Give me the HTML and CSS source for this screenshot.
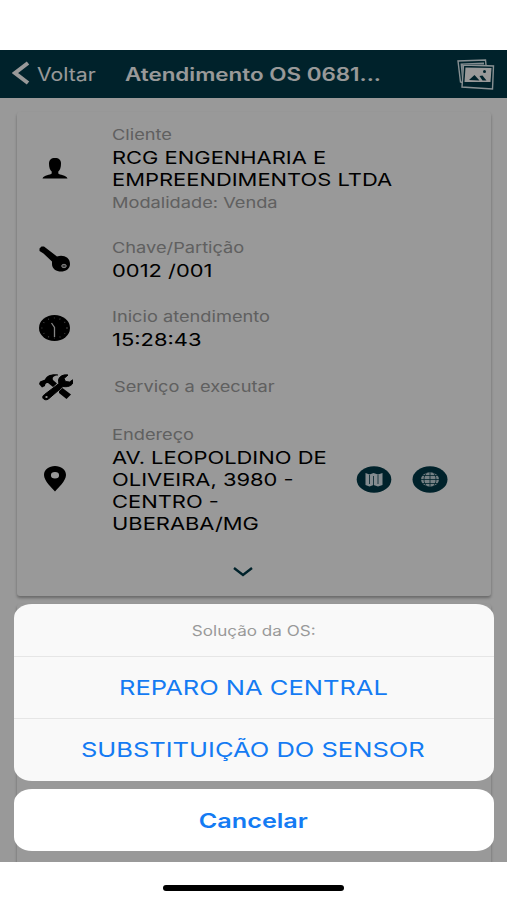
FILE: index.html
```html
<!DOCTYPE html>
<html lang="pt-BR">
<head>
<meta charset="utf-8">
<title>Atendimento OS</title>
<link rel="stylesheet" href="styles.css">
</head>
<body>
<main class="app">
  <header class="nav">
    <svg class="back" viewBox="0 0 18 24"><path d="M16 2 3 12l13 10" fill="none" stroke="#fff" stroke-width="4"/></svg>
    <span class="voltar wide">Voltar</span>
    <h1 class="wide">Atendimento OS 0681...</h1>
    <svg class="photos" viewBox="0 0 38 31">
      <path d="M5.500 23.500 3.500 23 1 2 28.500 1l.5 5" fill="none" stroke="#e4f1f5" stroke-width="1.400"/>
      <path d="M5 20 3.500 4.500 27 3.500v2L6 5Z" fill="#dceaf0"/>
      <path d="m6.500 6 30 1-1 23L5 28Z" fill="#003a49" stroke="#e4f1f5" stroke-width="1.400"/>
      <path d="m8.500 8.500 26 .5-1 14H7.500Z" fill="#fff"/>
      <path d="m12 21 5.500-5 5 5.500Zm10.500-4 3-.5 4 5h-4Z" fill="#003a49"/><circle cx="27.500" cy="12.500" r="1.500" fill="#003a49"/>
    </svg>
  </header>
  <section class="content">
    <article class="card">
      <div class="row client">
        <svg class="icon" viewBox="0 0 36 28"><path d="M18 3c4 0 6 2 6 5.500 0 4-1 6.500-2.700 8v2c1 1.500 8.200 1.500 9.200 5H5.500c1-3.500 8.200-3.500 9.200-5v-2C13 15 12 12.500 12 8.500 12 5 14 3 18 3Z"/></svg>
        <div class="info">
          <span class="label wide up">Cliente</span>
          <strong class="wide">RCG ENGENHARIA E<br>EMPREENDIMENTOS LTDA</strong>
          <span class="label wide down">Modalidade: Venda</span>
        </div>
      </div>
      <div class="row key">
        <svg class="icon" viewBox="0 0 36 28"><path d="m2.500 3.500 2-2h2.500l13 10c6-2 13 .5 13 7.500 0 10-18 10-18 0v-2.500l-8.500-8-4-2.500Z"/><ellipse cx="27" cy="21" rx="2.300" ry="1.700" fill="#666" stroke="#fff" stroke-width=".8"/></svg>
        <div class="info"><span class="label wide">Chave/Partição</span><strong class="wide">0012 /001</strong></div>
      </div>
      <div class="row start">
        <svg class="icon" viewBox="0 0 36 28"><ellipse cx="17.500" cy="14" rx="15.500" ry="13"/><ellipse cx="17.500" cy="14" rx="12.500" ry="10" fill="none" stroke="#888" stroke-dasharray=".8 5" stroke-width="1.200"/><path d="m14.500 9 3 4.500V23" fill="none" stroke="#ddd" stroke-width="1.300"/></svg>
        <div class="info"><span class="label wide">Inicio atendimento</span><strong class="wide">15:28:43</strong></div>
      </div>
      <div class="row service">
        <svg class="icon tools" viewBox="0 0 36 28"><path d="m2 11 1-2.500 5-2C9 3 14 .500 21 1.500v1c-4 0-6 1.500-5 4.500l4 3.500-4 3.500-5-4c-2-.5-3 1-3 3l-3 1.500Z"/><path d="m22 18 3.500-3 8.500 6.500-4.500 4.500-7.500-6Z"/><path d="M7.500 21.500 22 10.500c-2-5 2-9.500 9-8.500l-4 3.500 1.500 3 4 .5L37 6c0 6-5 8.500-11 7.500L12 25.500c-4 3.500-9-1-4.500-4Z" stroke="#000"/><ellipse cx="9.500" cy="24" rx="1.200" ry="1" fill="#fff"/></svg>
        <div class="info"><span class="label wide">Serviço a executar</span></div>
      </div>
      <div class="row address">
        <svg class="icon" viewBox="0 0 36 28"><path fill-rule="evenodd" d="M18 1c6 0 11 3.500 11 9 0 6-8 13-11 16.500C15 23 7 16 7 10c0-5.500 5-9 11-9Zm0 6a4 3.200 0 1 0 0 6.500A4 3.200 0 1 0 18 7Z"/></svg>
        <div class="info"><span class="label wide">Endereço</span><strong class="wide">AV. LEOPOLDINO DE<br>OLIVEIRA, 3980 -<br>CENTRO -<br>UBERABA/MG</strong></div>
        <div class="actions">
          <svg viewBox="0 0 36 27"><ellipse cx="18" cy="13.500" rx="17.300" ry="13.200" fill="#003a49"/><path d="m9.500 7 4 1.500L17.500 7 22 8.500 26.500 7v12L22 20.500 17.500 19l-4 1.500-4-1.500Z" fill="#dceaf0"/><path d="M13.500 9v9M17.500 10v10M22 9v9" stroke="#003a49" stroke-width=".8"/></svg>
          <svg viewBox="0 0 36 27"><ellipse cx="18" cy="13.500" rx="17.500" ry="13.200" fill="#003a49"/><ellipse cx="18" cy="13.500" rx="9" ry="7.200" fill="#c4d6dc"/><path d="M9 13.500h18M10.500 9.500h15M10.500 17.500h15M18 6v15M15 6c-4 5-4 10 0 15M21 6c4 5 4 10 0 15" fill="none" stroke="#003a49" stroke-width=".8"/></svg>
        </div>
      </div>
      <svg class="chevron" viewBox="0 0 20 12"><path d="m1 2 9 7 9-7" fill="none" stroke="#003a49" stroke-width="2.400"/></svg>
    </article>
    <article class="card next"></article>
  </section>
  <div class="backdrop"></div>
  <div class="sheet">
    <div class="group">
      <div class="caption"><span class="wide">Solução da OS:</span></div>
      <div class="option"><span class="wide">REPARO NA CENTRAL</span></div>
      <div class="option"><span class="wide">SUBSTITUIÇÃO DO SENSOR</span></div>
    </div>
    <div class="cancel"><span class="wide">Cancelar</span></div>
  </div>
</main>
<footer class="home"><i></i></footer>
</body>
</html>
```
FILE: styles.css
```css
* { box-sizing: border-box; }
body { margin: 0; width: 507px; height: 900px; padding-top: 50px; overflow: hidden; background: #fff; font-family: Inter, "Liberation Sans", sans-serif; }
.app { position: relative; height: 812px; overflow: hidden; background: #fff; }
.wide { display: inline-block; white-space: nowrap; transform: scaleX(1.26); transform-origin: left; }
.nav { height: 48px; display: flex; align-items: center; padding: 0 12px; background: #003a49; color: #fff; }
.back { width: 18px; height: 24px; flex: none; margin-top: -2px; }
.voltar { width: 88px; margin-left: 7px; flex: none; font-size: 18px; transform: scaleX(1.18); }
h1 { width: 320px; margin: 0; font-size: 18px; font-weight: 600; }
h1.wide { transform: scaleX(1.244); }
.photos { width: 38px; height: 31px; flex: none; margin-left: auto; }
.content { padding: 14px 16px 0 17px; }
.card { height: 484px; border-radius: 3px; background: #fff; box-shadow: 0 2px 3px rgba(0,0,0,.32); display: flex; flex-direction: column; }
.next { height: 300px; margin-top: 8px; }
.row { display: flex; align-items: center; flex: none; padding-left: 20px; }
.icon { width: 36px; height: 28px; flex: none; margin-right: 39px; }
.tools { position: relative; top: 1px; }
.info { display: flex; flex-direction: column; align-items: flex-start; flex: none; width: 226px; padding-top: 1px; }
.label { position: relative; top: -1px; font-size: 15px; line-height: 22px; color: #a0a0a0; transform: scaleX(1.215); }
.up { margin-top: -1px; }
.down { top: 1px; }
.service .label { top: 0; }
strong { font-size: 17.500px; line-height: 22px; font-weight: 400; color: #000; }
strong.wide { transform: scaleX(1.252); }
.client { height: 113px; }
.key { height: 68px; }
.start { height: 70px; }
.service { height: 46px; }
.service .info { padding-left: 2px; }
.address { height: 140px; }
.actions { display: flex; gap: 20px; margin-left: 18px; }
.actions svg { width: 36px; height: 27px; }
.chevron { width: 20px; height: 12px; margin: 17px 0 0 216px; }
.backdrop { position: absolute; inset: 0; background: rgba(0,0,0,.4); }
.sheet { position: absolute; left: 14px; right: 13px; bottom: 11px; text-align: center; color: #147bf3; }
.sheet .wide { transform-origin: center; }
.group { height: 177px; border-radius: 18px / 14px; overflow: hidden; background: #f9f9f9; }
.caption { height: 52px; display: flex; align-items: center; justify-content: center; font-size: 14px; color: #999; }
.caption .wide { transform: scaleX(1.22); }
.option { height: 62px; padding-right: 2px; display: flex; align-items: center; justify-content: center; border-top: 1px solid #e6e6e6; font-size: 20px; }
.option .wide { transform: scaleX(1.275); }
.cancel { height: 62px; margin-top: 8px; padding: 1px 1px 0 0; display: flex; align-items: center; justify-content: center; border-radius: 18px / 14px; background: #fff; font-size: 20px; font-weight: 600; }
.home { height: 38px; display: flex; justify-content: center; padding-top: 23px; }
.home i { width: 181px; height: 6px; border-radius: 3px; background: #000; }
```
